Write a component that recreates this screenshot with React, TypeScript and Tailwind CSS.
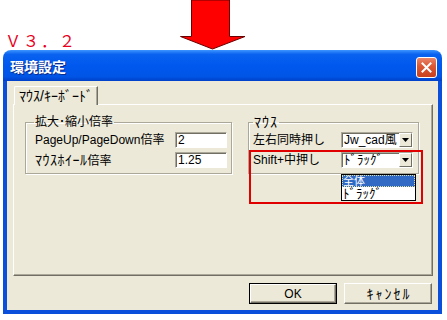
export default function App() {
  return (
    <div className="relative w-[447px] h-[320px] bg-white overflow-hidden font-['Liberation_Sans','Noto_Sans_CJK_JP',sans-serif] text-[12px] leading-[14px] text-black">
      {/* header note + arrow */}
      <div className="flex h-[50px]">
        <span className="w-[175px] pl-[5px] pt-[32px] font-['Noto_Sans_CJK_JP',sans-serif] text-[16px] leading-[16px] tracking-[2px] text-[#e8001c]">Ｖ３．２</span>
        <svg width="66" height="50" viewBox="0 0 66 50" className="ml-[5px]">
          <polygon points="11.5,0 49.5,0 49.5,36.5 65,36.5 32.5,49 0.5,36.5 11.5,36.5" fill="#ff0000" stroke="#6b0000" strokeWidth="1" />
        </svg>
      </div>

      {/* window */}
      <div className="ml-[3px] w-[439px] h-[264px] flex flex-col">
        <div className="h-[31px] rounded-t-[8px] flex items-center justify-between pl-[7px] pr-[5px] bg-[linear-gradient(to_bottom,#3d95ff_0%,#0a62f0_14%,#0058ee_50%,#0055e5_86%,#0040c8_100%)]">
          <span className="text-white font-bold font-['Noto_Sans_CJK_JP',sans-serif] text-[14px] leading-[15px] pt-[1px] [text-shadow:1px_1px_0_#0a2a8a]">環境設定</span>
          <div className="mt-[4px] w-[21px] h-[21px] rounded-[3px] border border-white flex items-center justify-center bg-[linear-gradient(to_bottom,#e8866a_0%,#dd5a36_40%,#c8401e_100%)]">
            <svg width="11" height="11" viewBox="0 0 11 11">
              <path d="M1.5 1.5 L9.5 9.5 M9.5 1.5 L1.5 9.5" stroke="#fff" strokeWidth="2" strokeLinecap="square" />
            </svg>
          </div>
        </div>

        <div className="flex-1 flex flex-col border-x-4 border-b-4 border-[#0a4fdc] bg-[#ece9d8] pt-[5px] pl-[6px] pr-[5px]">
          {/* tab */}
          <div className="flex">
            <div className="relative z-10 ml-[1px] -mb-[1px] h-[19px] pl-[4px] pr-[4px] pt-[1px] text-[14px] leading-[16px] border-t border-l border-white border-r border-r-[#716f64] shadow-[inset_-1px_0_0_#aca899] rounded-tl-[2px] bg-[#ece9d8]">
              ﾏｳｽ/ｷｰﾎﾞｰﾄﾞ
            </div>
          </div>

          {/* tab page */}
          <div className="h-[172px] flex gap-[16px] pt-[10px] pl-[11px] border border-t-white border-l-white border-r-[#716f64] border-b-[#716f64] shadow-[inset_-1px_-1px_0_#aca899]">
            <fieldset className="w-[207px] h-[59px] border border-[#aca899] shadow-[1px_1px_0_#fff,inset_1px_1px_0_#fff] pl-[9px] pr-[4px] pt-[3px] flex flex-col gap-[4px]">
              <legend className="px-[1px] -ml-[1px]">拡大･縮小倍率</legend>
              <div className="flex items-center justify-between h-[16px]">
                <span>PageUp/PageDown倍率</span>
                <div className="w-[52px] h-[16px] bg-white border border-t-[#aca899] border-l-[#aca899] border-r-white border-b-white shadow-[inset_1px_1px_0_#716f64] pl-[2px] leading-[14px]">2</div>
              </div>
              <div className="flex items-center justify-between h-[16px]">
                <span><span className="text-[14px] tracking-[0.5px]">ﾏｳｽﾎｲｰﾙ</span>倍率</span>
                <div className="w-[52px] h-[16px] bg-white border border-t-[#aca899] border-l-[#aca899] border-r-white border-b-white shadow-[inset_1px_1px_0_#716f64] pl-[2px] leading-[14px]">1.25</div>
              </div>
            </fieldset>

            <fieldset className="w-[171px] h-[59px] border border-[#aca899] shadow-[1px_1px_0_#fff,inset_1px_1px_0_#fff] pl-[4px] pr-[5px] pt-[3px] flex flex-col gap-[4px]">
              <legend className="px-[1px] text-[14px] tracking-[1px]">ﾏｳｽ</legend>
              <div className="flex items-center justify-between h-[16px]">
                <span>左右同時押し</span>
                <Combo text="Jw_cad風" />
              </div>
              <div className="flex items-center justify-between h-[16px]">
                <span>Shift+中押し</span>
                <Combo text="ﾄﾞﾗｯｸﾞ" wide />
              </div>
            </fieldset>
          </div>

          {/* buttons */}
          <div className="mt-[7px] flex justify-end gap-[7px] pr-[1px]">
            <div className="w-[88px] h-[21px] border border-black">
              <div className="h-full flex items-center justify-center border border-t-white border-l-white border-r-[#716f64] border-b-[#716f64] shadow-[inset_-1px_-1px_0_#aca899]">OK</div>
            </div>
            <div className="w-[88px] h-[21px] flex items-center justify-center text-[14px] tracking-[2px] pl-[2px] border border-t-white border-l-white border-r-[#716f64] border-b-[#716f64] shadow-[inset_-1px_-1px_0_#aca899]">ｷｬﾝｾﾙ</div>
          </div>
        </div>
      </div>

      {/* opened drop-down list */}
      <div className="absolute left-[341px] top-[174px] w-[75px] border border-black bg-white">
        <div className="h-[12px] leading-[12px] text-[11px] pl-[1px] bg-[#316ac5] text-white outline outline-1 outline-dotted outline-[#e0e0a0] -outline-offset-1">全体</div>
        <div className="h-[13px] leading-[13px] text-[13px] pl-[1px]">ﾄﾞﾗｯｸﾞ</div>
      </div>

      {/* red highlight frame */}
      <div className="absolute left-[249px] top-[150px] w-[174px] h-[54px] border-2 border-[#e00000]" />
    </div>
  )
}

function Combo({ text, wide }: { text: string; wide?: boolean }) {
  return (
    <div className="w-[72px] h-[16px] flex bg-white border border-t-[#aca899] border-l-[#aca899] border-r-white border-b-white shadow-[inset_1px_1px_0_#716f64]">
      <span className={wide ? "flex-1 overflow-hidden whitespace-nowrap pl-[2px] leading-[14px] text-[13px]" : "flex-1 overflow-hidden whitespace-nowrap pl-[2px] leading-[14px]"}>{text}</span>
      <div className="w-[13px] h-[14px] flex items-center justify-center bg-[#ece9d8] border border-t-white border-l-white border-r-[#716f64] border-b-[#716f64]">
        <svg width="7" height="4" viewBox="0 0 7 4">
          <polygon points="0,0 7,0 3.5,4" fill="#000" />
        </svg>
      </div>
    </div>
  )
}
